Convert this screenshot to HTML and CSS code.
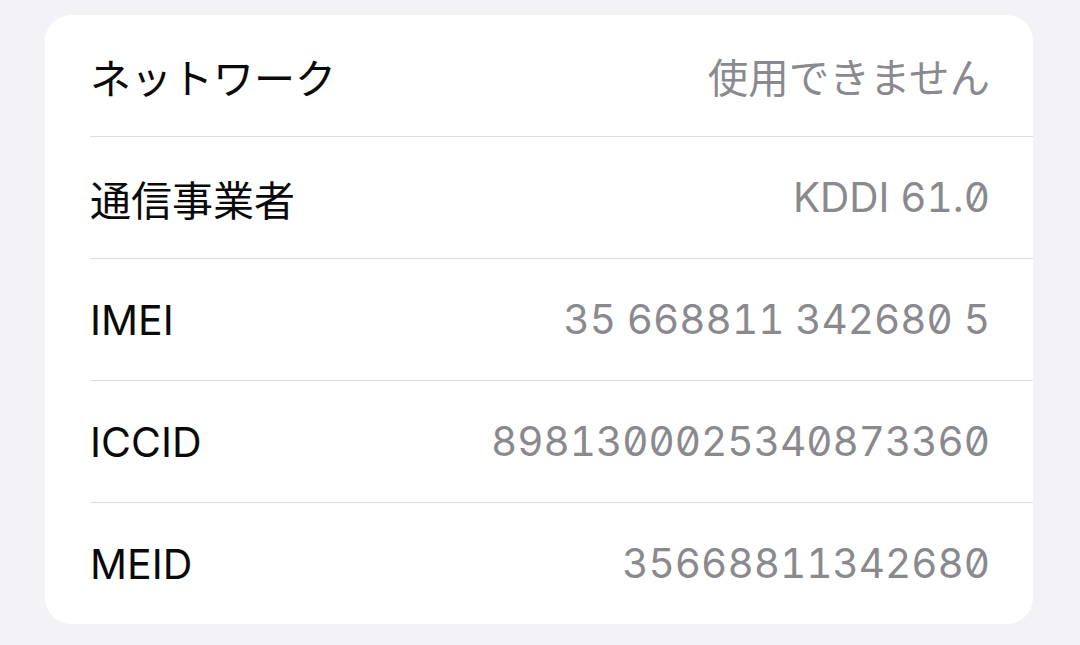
FILE: index.html
```html
<!DOCTYPE html>
<html lang="ja">
<head>
    <meta charset="UTF-8">
    <meta name="viewport" content="width=device-width, initial-scale=1.0">
    <title>情報</title>
    <link rel="stylesheet" href="styles.css">
</head>
<body>

<div class="info-card">
    <div class="info-row">
        <span class="info-label">ネットワーク</span>
        <span class="info-value">使用できません</span>
    </div>
    <div class="info-row">
        <span class="info-label">通信事業者</span>
        <span class="info-value">KDDI 61.0</span>
    </div>
    <div class="info-row">
        <span class="info-label">IMEI</span>
        <span class="info-value">35 668811 342680 5</span>
    </div>
    <div class="info-row">
        <span class="info-label">ICCID</span>
        <span class="info-value">8981300025340873360</span>
    </div>
    <div class="info-row">
        <span class="info-label">MEID</span>
        <span class="info-value">35668811342680</span>
    </div>
</div>

</body>
</html>
```

FILE: styles.css
```css
body {
    margin: 0;
    padding: 15px 47px 0 45px;
    height: 630px;
    background-color: #f2f2f7;
    font-family: Inter, "Noto Sans CJK JP", sans-serif;
}
.info-card {
    background: #fff;
    border-radius: 26px;
    padding-left: 45px;
}
.info-row {
    display: flex;
    justify-content: space-between;
    align-items: center;
    height: 121px;
    padding-right: 43px;
    border-bottom: 1.5px solid #dcdce0;
    font-size: 41px;
}
.info-row:last-child {
    border-bottom: none;
}
.info-label {
    color: #0a0a0a;
}
.info-value {
    color: #8a8a8e;
    font-size: 40.5px;
    font-variant-numeric: tabular-nums;
    font-feature-settings: "tnum", "zero";
}
```
